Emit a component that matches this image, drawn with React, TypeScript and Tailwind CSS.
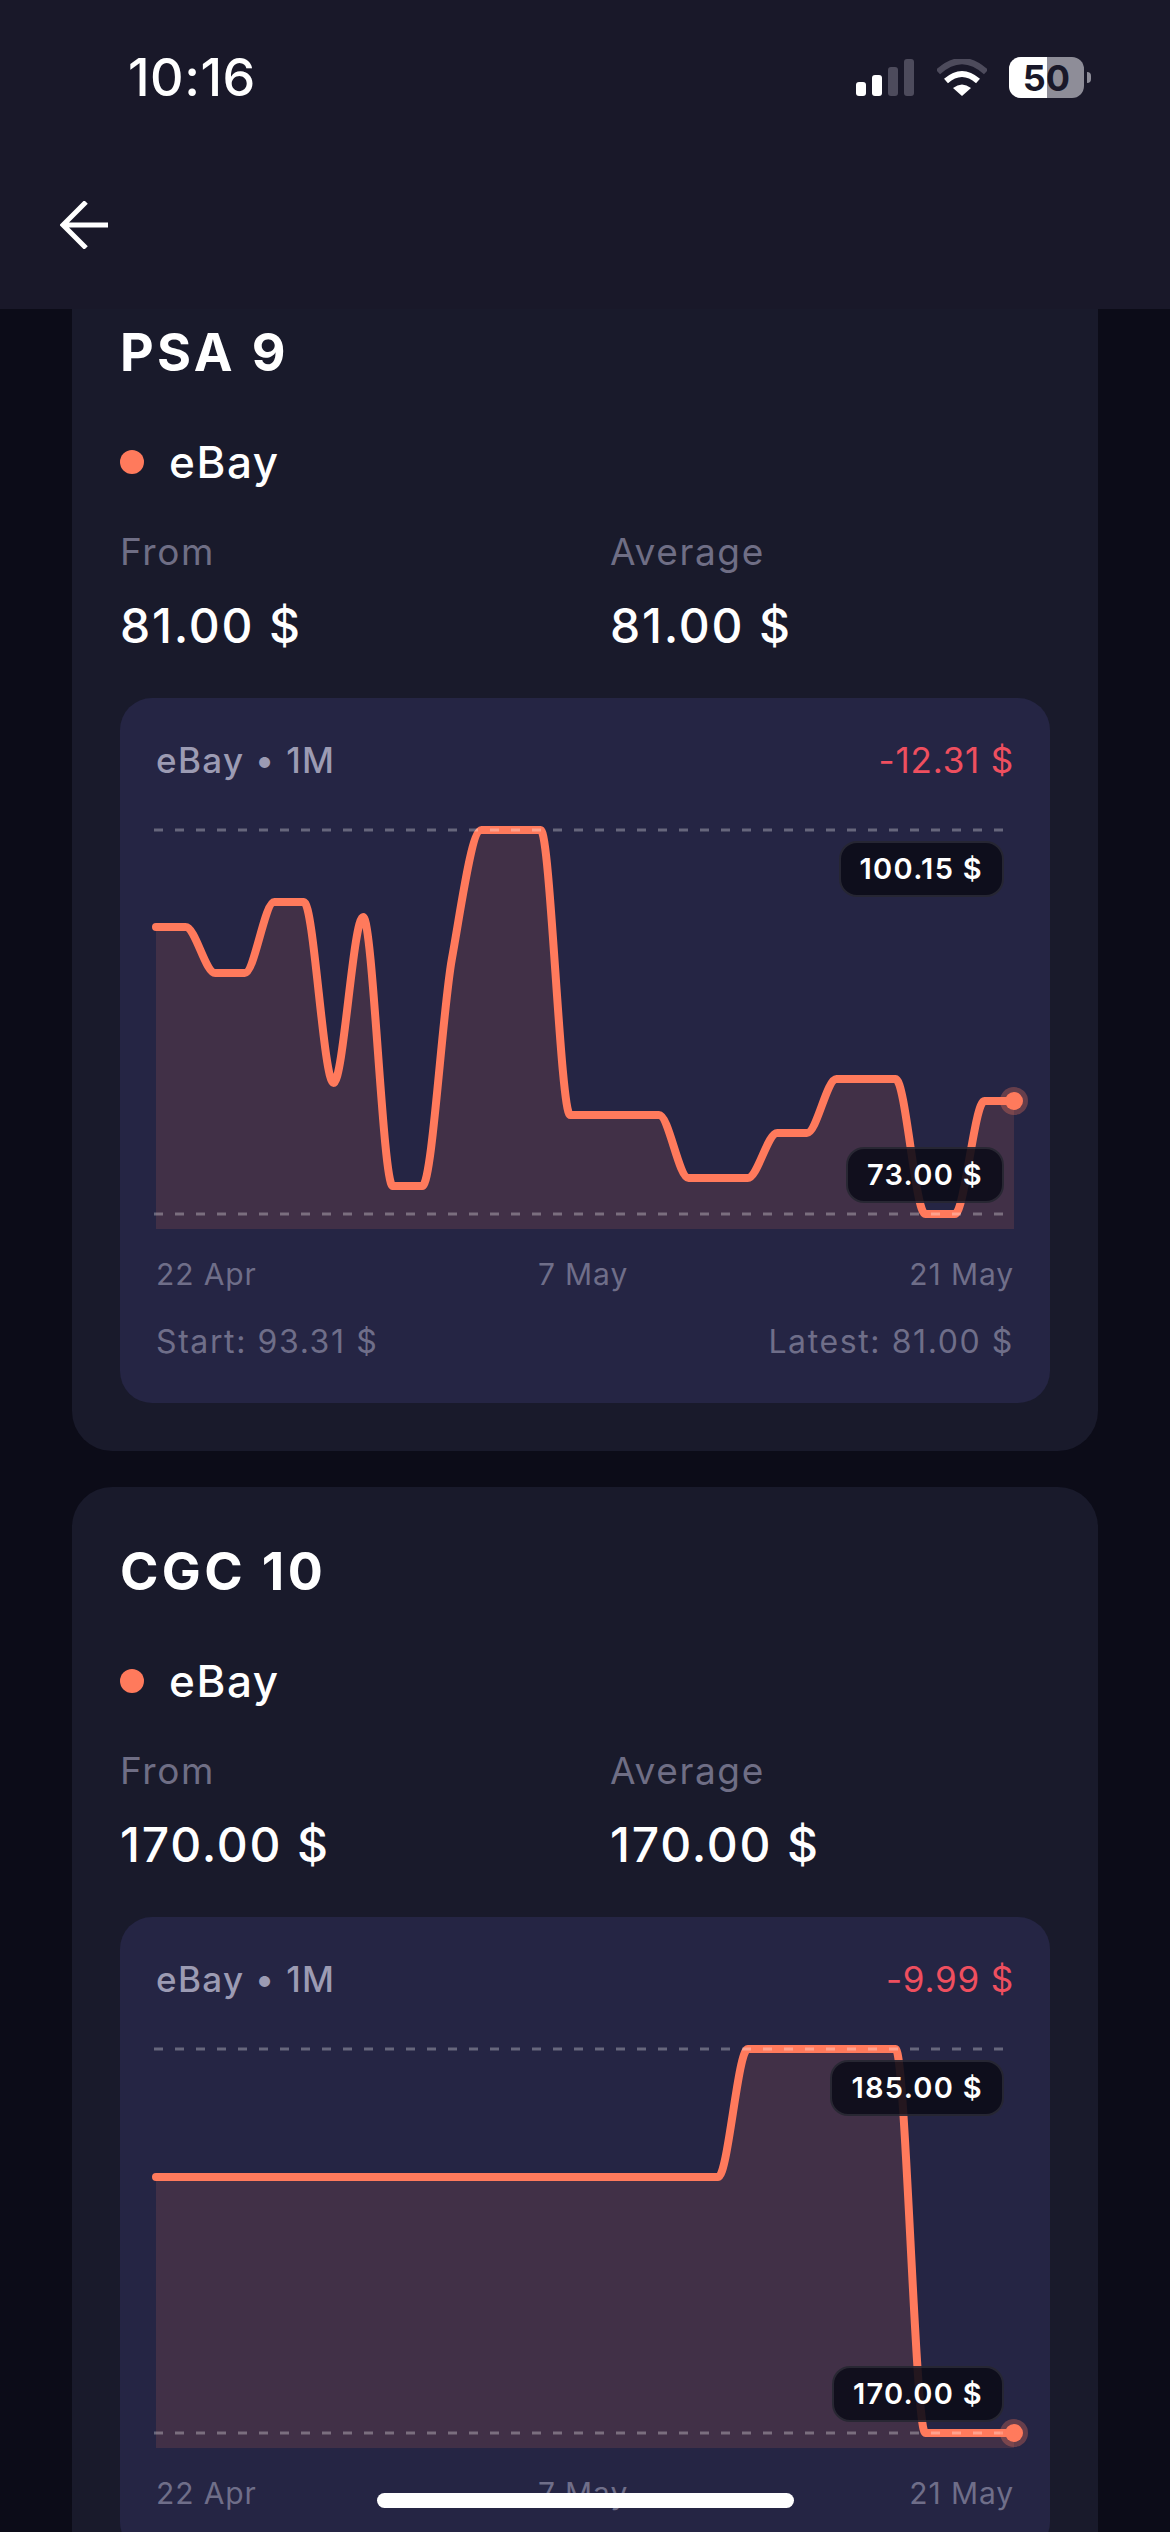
const FONT = "font-['Inter',sans-serif]";

// y values inside the 858x413 chart box, one per point
const PSA_POINTS = [
  111, 111, 157, 157, 86, 86, 267, 101, 370, 370, 143, 14, 14, 14, 299, 299, 299, 299, 362, 362, 362, 317, 317, 263, 263,
  263, 398, 398, 285, 285,
];
const CGC_POINTS = [
  142, 142, 142, 142, 142, 142, 142, 142, 142, 142, 142, 142, 142, 142, 142, 142, 142, 142, 142, 142, 14, 14, 14, 14, 14,
  14, 398, 398, 398, 398,
];

const CHART_W = 858;
const CHART_H = 413;

function monotonePath(ys: number[]) {
  const step = CHART_W / (ys.length - 1);
  const slopes = ys.map((y, i) => {
    if (i === 0 || i === ys.length - 1) return 0;
    const a = (y - ys[i - 1]) / step;
    const b = (ys[i + 1] - y) / step;
    if (a * b <= 0) return 0;
    return (2 * a * b) / (a + b);
  });
  let d = `M0 ${ys[0]}`;
  for (let i = 1; i < ys.length; i++) {
    const x0 = (i - 1) * step;
    const x1 = i * step;
    d += ` C${x0 + step / 3} ${ys[i - 1] + (slopes[i - 1] * step) / 3} ${x1 - step / 3} ${ys[i] - (slopes[i] * step) / 3} ${x1} ${ys[i]}`;
  }
  return d;
}

function StatusBar() {
  return (
    <div className="flex items-start justify-between pl-[128px] pr-[79px] pt-[50px]">
      <span className="text-[52px] leading-[56px] font-medium tracking-[0.5px] text-white">10:16</span>
      <div className="flex items-start pt-[7px]">
        <div className="flex items-end gap-[6px] h-[37px] mt-[2px]">
          <div className="w-[10px] h-[14px] rounded-[3px] bg-white" />
          <div className="w-[10px] h-[21px] rounded-[3px] bg-white" />
          <div className="w-[10px] h-[29px] rounded-[3px] bg-[#4d4b5c]" />
          <div className="w-[10px] h-[37px] rounded-[3px] bg-[#4d4b5c]" />
        </div>
        <svg width="50" height="37" viewBox="0 0 50 37" fill="none" className="ml-[23px] mt-[2px]">
          <path d="M1 13 Q25 -9 49 13" stroke="#4d4b5c" strokeWidth="6" />
          <path d="M9 22 Q25 8 41 22" stroke="#fff" strokeWidth="6" />
          <path d="M25 37 L16 29 Q25 22 34 29 Z" fill="#fff" />
        </svg>
        <div className="relative ml-[22px] w-[75px] h-[41px] rounded-[12px] bg-[#8e8d98]">
          <div className="w-[38px] h-full rounded-l-[12px] bg-white" />
          <span className="absolute inset-0 flex items-center justify-center text-[36px] leading-none font-bold text-[#191829]">
            50
          </span>
        </div>
        <div className="w-[4px] h-[11px] mt-[15px] ml-[3px] rounded-r-full bg-[#8e8d98]" />
      </div>
    </div>
  );
}

function PriceChart({ points, high, low }: { points: number[]; high: string; low: string }) {
  const line = monotonePath(points);
  const lastY = points[points.length - 1];

  return (
    <div className="relative h-[413px] mt-[36px]">
      <svg width={CHART_W} height={CHART_H} viewBox={`0 0 ${CHART_W} ${CHART_H}`} fill="none" className="overflow-visible">
        <path d={`${line} L${CHART_W} ${CHART_H} L0 ${CHART_H} Z`} fill="#ff7a5c" fillOpacity="0.13" />
        <path d={line} stroke="#ff7a5c" strokeWidth="8" strokeLinecap="round" strokeLinejoin="round" />
        <path d="M-2 14H847" stroke="#ffffff" strokeOpacity="0.3" strokeWidth="3" strokeDasharray="9 12" />
        <path d="M-2 398H847" stroke="#ffffff" strokeOpacity="0.3" strokeWidth="3" strokeDasharray="9 12" />
        <circle cx={CHART_W} cy={lastY} r="14" fill="#ff7a5c" fillOpacity="0.3" />
        <circle cx={CHART_W} cy={lastY} r="9" fill="#ff7a5c" />
      </svg>
      <div className="absolute top-[25px] right-[10px] h-[56px] flex items-center px-[19px] rounded-[18px] border-2 border-white/10 bg-[#0c0c18]/90 text-[29px] font-semibold tracking-[1.3px] text-white">
        {high}
      </div>
      <div className="absolute top-[331px] right-[10px] h-[56px] flex items-center px-[19px] rounded-[18px] border-2 border-white/10 bg-[#0c0c18]/90 text-[29px] font-semibold tracking-[1.3px] text-white">
        {low}
      </div>
    </div>
  );
}

function GradeCard({
  grade,
  from,
  average,
  change,
  start,
  latest,
  points,
  high,
  low,
}: {
  grade: string;
  from: string;
  average: string;
  change: string;
  start?: string;
  latest?: string;
  points: number[];
  high: string;
  low: string;
}) {
  return (
    <div className="rounded-[40px] bg-[#191a2b] px-[48px] pt-[48px] pb-[48px]">
      <h2 className="text-[52px] leading-[74px] font-bold tracking-[3.4px] text-white">{grade}</h2>

      <div className="flex items-center gap-[25px] mt-[38px] h-[68px]">
        <div className="w-[24px] h-[24px] rounded-full bg-[#ff7a5c]" />
        <span className="text-[44px] font-medium tracking-[1.6px] text-white">eBay</span>
      </div>

      <div className="grid grid-cols-[490px_1fr] mt-[34px]">
        <div>
          <div className="text-[37px] leading-[44px] tracking-[1.6px] text-[#6f6e85]">From</div>
          <div className="text-[48px] leading-[56px] mt-[24px] font-medium tracking-[1.8px] text-white">{from}</div>
        </div>
        <div>
          <div className="text-[37px] leading-[44px] tracking-[1.6px] text-[#6f6e85]">Average</div>
          <div className="text-[48px] leading-[56px] mt-[24px] font-medium tracking-[1.8px] text-white">{average}</div>
        </div>
      </div>

      <div className="mt-[44px] rounded-[32px] bg-[#252544] px-[36px] pt-[42px] pb-[43px]">
        <div className="flex items-center justify-between h-[40px] text-[35px]">
          <span className="font-medium tracking-[1.4px] text-[#9c9bb3]">eBay • 1M</span>
          <span className="tracking-[0.8px] text-[#ef4f5f]">{change}</span>
        </div>

        <PriceChart points={points} high={high} low={low} />

        <div className="relative flex justify-between mt-[27px] h-[36px] text-[30px] leading-[36px] tracking-[0.9px] text-[#6f6e89]">
          <span>22 Apr</span>
          <span>7 May</span>
          <span>21 May</span>
        </div>

        {start && (
          <div className="flex justify-between mt-[32px] h-[36px] text-[32px] leading-[36px] tracking-[1.6px] text-[#6f6e89]">
            <span>{start}</span>
            <span>{latest}</span>
          </div>
        )}
      </div>
    </div>
  );
}

export default function App() {
  return (
    <div className={`relative h-[2532px] overflow-hidden bg-[#0c0c18] ${FONT}`}>
      {/* Header sits over the scrolled list */}
      <header className="absolute inset-x-0 top-0 z-10 h-[309px] bg-[#191829]">
        <StatusBar />
        <svg width="50" height="48" viewBox="0 0 50 48" fill="none" className="mt-[95px] ml-[60px]">
          <path d="M48 24H3M26 1L3 24L26 47" stroke="#fff" strokeWidth="5" />
        </svg>
      </header>

      <main className="flex flex-col gap-[36px] px-[72px] pt-[268px]">
        <GradeCard
          grade="PSA 9"
          from="81.00 $"
          average="81.00 $"
          change="-12.31 $"
          start="Start: 93.31 $"
          latest="Latest: 81.00 $"
          points={PSA_POINTS}
          high="100.15 $"
          low="73.00 $"
        />
        {/* Its Start / Latest row is below the fold in the screenshot */}
        <GradeCard
          grade="CGC 10"
          from="170.00 $"
          average="170.00 $"
          change="-9.99 $"
          points={CGC_POINTS}
          high="185.00 $"
          low="170.00 $"
        />
      </main>

      {/* Home indicator */}
      <div className="absolute bottom-[24px] left-[377px] z-20 w-[417px] h-[15px] rounded-full bg-white" />
    </div>
  );
}
